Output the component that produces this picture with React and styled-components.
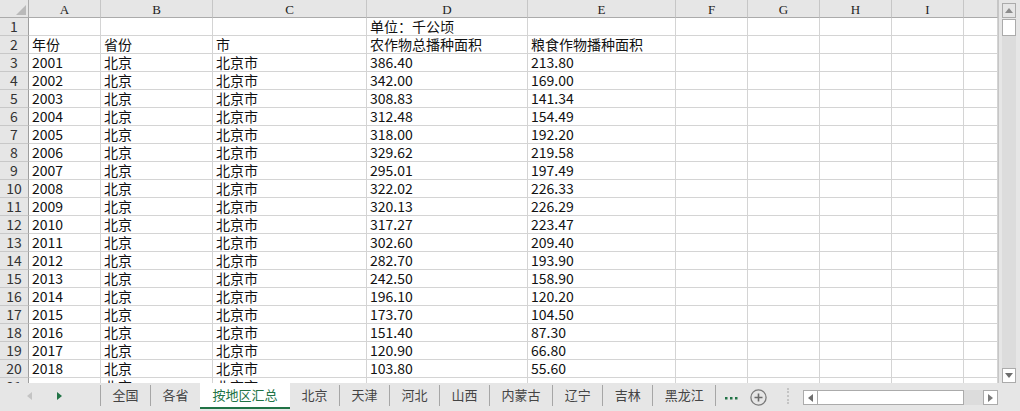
import React from 'react';
import styled, { createGlobalStyle } from 'styled-components';

const GlobalStyle = createGlobalStyle`
  html, body {
    margin: 0;
    padding: 0;
    overflow: hidden;
    background: #fff;
  }
`;

const columns = ['A', 'B', 'C', 'D', 'E', 'F', 'G', 'H', 'I', ''];
const widths = [72, 112, 154, 161, 148, 72, 72, 72, 72];

const values = [
  ['2001', '386.40', '213.80'],
  ['2002', '342.00', '169.00'],
  ['2003', '308.83', '141.34'],
  ['2004', '312.48', '154.49'],
  ['2005', '318.00', '192.20'],
  ['2006', '329.62', '219.58'],
  ['2007', '295.01', '197.49'],
  ['2008', '322.02', '226.33'],
  ['2009', '320.13', '226.29'],
  ['2010', '317.27', '223.47'],
  ['2011', '302.60', '209.40'],
  ['2012', '282.70', '193.90'],
  ['2013', '242.50', '158.90'],
  ['2014', '196.10', '120.20'],
  ['2015', '173.70', '104.50'],
  ['2016', '151.40', '87.30'],
  ['2017', '120.90', '66.80'],
  ['2018', '103.80', '55.60'],
];

const rows = [
  ['', '', '', '单位：千公顷', ''],
  ['年份', '省份', '市', '农作物总播种面积', '粮食作物播种面积'],
  ...values.map(([y, a, b]) => [y, '北京', '北京市', a, b]),
  ['', '北京', '北京市', '', ''],
];

const tabs = [
  '全国',
  '各省',
  '按地区汇总',
  '北京',
  '天津',
  '河北',
  '山西',
  '内蒙古',
  '辽宁',
  '吉林',
  '黑龙江',
];
const activeTab = 2;

export default function App() {
  return (
    <>
      <GlobalStyle />
      <Window>
        <Main>
          <Sheet>
            <Corner>
              <CornerMark />
            </Corner>
            {columns.map((c, i) => (
              <ColHead key={'h' + i}>{c}</ColHead>
            ))}
            {rows.map((row, r) => (
              <React.Fragment key={r}>
                <RowHead>{r + 1}</RowHead>
                {columns.map((_, c) => (
                  <Cell key={c}>{row[c] || ''}</Cell>
                ))}
              </React.Fragment>
            ))}
          </Sheet>
          <VScroll>
            <ScrollBtn $dim>
              <Arrow $dir='up' $color='#8c8c8c' />
            </ScrollBtn>
            <VThumb />
            <VTrack />
            <ScrollBtn>
              <Arrow $dir='down' $color='#6e6e6e' />
            </ScrollBtn>
          </VScroll>
        </Main>

        <TabBar>
          <NavArea>
            <Arrow $dir='left' $color='#c4c4c4' />
            <Arrow $dir='right' $color='#217346' />
          </NavArea>
          <Sep />
          {tabs.map((t, i) => (
            <React.Fragment key={t}>
              <Tab $active={i === activeTab}>{t}</Tab>
              {i !== activeTab && i + 1 !== activeTab && <Sep />}
            </React.Fragment>
          ))}
          <More>
            <svg width='13' height='3' viewBox='0 0 13 3'>
              <rect x='0' y='0' width='2.5' height='2.5' fill='#217346' />
              <rect x='5' y='0' width='2.5' height='2.5' fill='#217346' />
              <rect x='10' y='0' width='2.5' height='2.5' fill='#217346' />
            </svg>
          </More>
          <AddSheet>
            <svg width='17' height='17' viewBox='0 0 17 17'>
              <circle cx='8.5' cy='8.5' r='7.6' fill='none' stroke='#7a7a7a' strokeWidth='1.3' />
              <path d='M8.5 4.5v8M4.5 8.5h8' stroke='#6a6a6a' strokeWidth='1.6' />
            </svg>
          </AddSheet>
          <Splitter />
          <HScroll>
            <HBtn>
              <Arrow $dir='left' $color='#6e6e6e' />
            </HBtn>
            <HThumb />
            <HTrack />
            <HBtn>
              <Arrow $dir='right' $color='#7a7a7a' />
            </HBtn>
          </HScroll>
        </TabBar>
      </Window>
    </>
  );
}

const Window = styled.div`
  width: 1020px;
  height: 411px;
  display: flex;
  flex-direction: column;
  background: #e6e6e6;
  overflow: hidden;
`;

const Main = styled.div`
  display: flex;
  height: 383px;
  flex-shrink: 0;
`;

const Sheet = styled.div`
  width: 999px;
  height: 383px;
  overflow: hidden;
  display: grid;
  grid-template-columns: 29px ${widths.map((w) => w + 'px').join(' ')} 1fr;
  grid-auto-rows: 18px;
  background: #fff;
  border-right: 1px solid #c6c6c6;
  box-sizing: border-box;
`;

const Corner = styled.div`
  background: #e6e6e6;
  border-right: 1px solid #ababab;
  border-bottom: 1px solid #ababab;
  box-sizing: border-box;
  display: flex;
  align-items: flex-end;
  justify-content: flex-end;
  padding: 0 2px 2px 0;
`;

const CornerMark = styled.span`
  width: 0;
  height: 0;
  border-left: 10px solid transparent;
  border-bottom: 10px solid #b9b9b9;
`;

const ColHead = styled.div`
  background: #e6e6e6;
  border-right: 1px solid #c6c6c6;
  border-bottom: 1px solid #ababab;
  box-sizing: border-box;
  padding-top: 3px;
  text-align: center;
  font-family: 'Liberation Serif', serif;
  font-size: 13px;
  line-height: 14px;
  color: #222;
`;

const RowHead = styled.div`
  background: #e6e6e6;
  border-right: 1px solid #9e9e9e;
  border-bottom: 1px solid #c8c8c8;
  box-sizing: border-box;
  text-align: center;
  font-family: 'Noto Sans CJK SC', 'Noto Sans', sans-serif;
  font-size: 14px;
  line-height: 17px;
  color: #333;
`;

const Cell = styled.div`
  border-right: 1px solid #d4d4d4;
  border-bottom: 1px solid #d4d4d4;
  box-sizing: border-box;
  padding-left: 3px;
  font-family: 'Noto Sans CJK SC', sans-serif;
  font-size: 14px;
  line-height: 17px;
  color: #111;
  white-space: nowrap;
`;

const VScroll = styled.div`
  width: 21px;
  display: flex;
  flex-direction: column;
  padding: 3px 4px 0 3px;
  box-sizing: border-box;
  background: #e6e6e6;
`;

const ScrollBtn = styled.div`
  height: 13px;
  flex-shrink: 0;
  background: ${(p) => (p.$dim ? '#e6e6e6' : '#fff')};
  border: 1px solid #ababab;
  display: flex;
  align-items: center;
  justify-content: center;
`;

const VThumb = styled.div`
  height: 15px;
  margin-top: 1px;
  background: #fff;
  border: 1px solid #ababab;
  flex-shrink: 0;
`;

const VTrack = styled.div`
  flex: 1;
  background: #dcdcdc;
`;

const Arrow = styled.span`
  width: 0;
  height: 0;
  ${(p) => {
    const c = p.$color;
    if (p.$dir === 'up')
      return `border-left:4px solid transparent;border-right:4px solid transparent;border-bottom:5px solid ${c};`;
    if (p.$dir === 'down')
      return `border-left:4px solid transparent;border-right:4px solid transparent;border-top:5px solid ${c};`;
    if (p.$dir === 'left')
      return `border-top:4px solid transparent;border-bottom:4px solid transparent;border-right:5px solid ${c};`;
    return `border-top:4px solid transparent;border-bottom:4px solid transparent;border-left:5px solid ${c};`;
  }}
`;

const TabBar = styled.div`
  flex: 1;
  display: flex;
  align-items: flex-start;
  background: #e6e6e6;
  font-family: 'Noto Sans CJK SC', sans-serif;
`;

const NavArea = styled.div`
  width: 100px;
  height: 25px;
  box-sizing: border-box;
  display: flex;
  align-items: center;
  padding-left: 27px;
  gap: 25px;
`;

const Sep = styled.span`
  width: 1px;
  height: 21px;
  margin-top: 2px;
  background: #a6a6a6;
  flex-shrink: 0;
`;

const Tab = styled.div`
  height: 24px;
  line-height: 24px;
  padding: 0 ${(p) => (p.$active ? '12.5px' : '11.5px')};
  font-size: 13px;
  white-space: nowrap;
  color: ${(p) => (p.$active ? '#217346' : '#444')};
  background: ${(p) => (p.$active ? '#fff' : 'transparent')};
  border-bottom: 2px solid ${(p) => (p.$active ? '#217346' : 'transparent')};
`;

const More = styled.div`
  margin: 14px 0 0 9px;
  display: flex;
`;

const AddSheet = styled.div`
  margin: 6px 0 0 12px;
  display: flex;
`;

const Splitter = styled.span`
  width: 0;
  height: 16px;
  margin: 5px 0 0 20px;
  border-left: 2px dotted #c4c4c4;
`;

const HScroll = styled.div`
  margin: 7px 22px 0 auto;
  width: 195px;
  height: 15px;
  display: flex;
  background: #dcdcdc;
`;

const HBtn = styled.div`
  width: 13px;
  background: #fff;
  border: 1px solid #ababab;
  display: flex;
  align-items: center;
  justify-content: center;
  flex-shrink: 0;
`;

const HThumb = styled.div`
  width: 145px;
  background: #fff;
  border: 1px solid #ababab;
  border-left: none;
  flex-shrink: 0;
`;

const HTrack = styled.div`
  flex: 1;
`;
